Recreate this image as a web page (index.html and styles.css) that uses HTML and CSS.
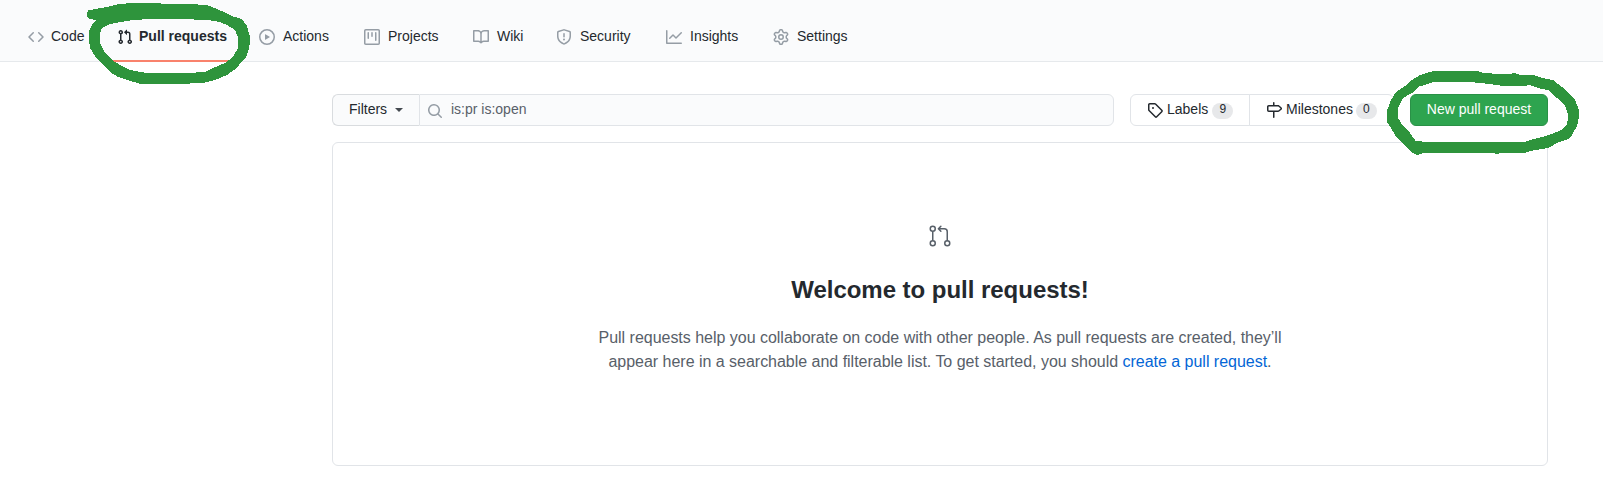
FILE: index.html
```html
<!DOCTYPE html>
<html lang="en">
<head>
<meta charset="utf-8">
<title>Pull requests</title>
<link rel="stylesheet" href="styles.css">
</head>
<body>
<nav class="repo-nav">
  <a class="tab tab-code"><svg class="icon" viewBox="0 0 16 16"><path fill-rule="evenodd" d="M4.72 3.22a.75.75 0 011.06 1.06L2.06 8l3.72 3.72a.75.75 0 11-1.06 1.06L.47 8.53a.75.75 0 010-1.06l4.25-4.25zm6.56 0a.75.75 0 10-1.06 1.06L13.94 8l-3.72 3.72a.75.75 0 101.06 1.06l4.25-4.25a.75.75 0 000-1.06l-4.25-4.25z"/></svg><span>Code</span></a>
  <a class="tab tab-pulls selected"><svg class="icon" viewBox="0 0 16 16"><path fill-rule="evenodd" d="M7.177 3.073L9.573.677A.25.25 0 0110 .854v4.792a.25.25 0 01-.427.177L7.177 3.427a.25.25 0 010-.354zM3.75 2.5a.75.75 0 100 1.5.75.75 0 000-1.5zm-2.25.75a2.25 2.25 0 113 2.122v5.256a2.251 2.251 0 11-1.5 0V5.372A2.25 2.25 0 011.5 3.25zM11 2.5h-1V4h1a1 1 0 011 1v5.628a2.251 2.251 0 101.5 0V5A2.5 2.5 0 0011 2.5zm1 10.25a.75.75 0 111.5 0 .75.75 0 01-1.5 0zM3.75 12a.75.75 0 100 1.5.75.75 0 000-1.5z"/></svg><span>Pull requests</span></a>
  <a class="tab tab-actions"><svg class="icon" viewBox="0 0 16 16"><path fill-rule="evenodd" d="M1.5 8a6.5 6.5 0 1113 0 6.5 6.5 0 01-13 0zM8 0a8 8 0 100 16A8 8 0 008 0zM6.379 5.227A.25.25 0 006 5.442v5.117a.25.25 0 00.379.214l4.264-2.559a.25.25 0 000-.428L6.379 5.227z"/></svg><span>Actions</span></a>
  <a class="tab tab-projects"><svg class="icon" viewBox="0 0 16 16"><path fill-rule="evenodd" d="M1.75 0A1.75 1.75 0 000 1.75v12.5C0 15.216.784 16 1.75 16h12.5A1.75 1.75 0 0016 14.25V1.75A1.75 1.75 0 0014.25 0H1.75zM1.5 1.75a.25.25 0 01.25-.25h12.5a.25.25 0 01.25.25v12.5a.25.25 0 01-.25.25H1.75a.25.25 0 01-.25-.25V1.75zM11.75 3a.75.75 0 00-.75.75v7.5a.75.75 0 001.5 0v-7.5a.75.75 0 00-.75-.75zm-8.25.75a.75.75 0 011.5 0v5.5a.75.75 0 01-1.5 0v-5.5zM8 3a.75.75 0 00-.75.75v3.5a.75.75 0 001.5 0v-3.5A.75.75 0 008 3z"/></svg><span>Projects</span></a>
  <a class="tab tab-wiki"><svg class="icon" viewBox="0 0 16 16"><path fill-rule="evenodd" d="M0 1.75A.75.75 0 01.75 1h4.253c1.227 0 2.317.59 3 1.501A3.744 3.744 0 0111.006 1h4.245a.75.75 0 01.75.75v10.5a.75.75 0 01-.75.75h-4.507a2.25 2.25 0 00-1.591.659l-.622.621a.75.75 0 01-1.06 0l-.622-.621A2.25 2.25 0 005.258 13H.75a.75.75 0 01-.75-.75V1.75zm8.755 3a2.25 2.25 0 012.25-2.25H14.5v9h-3.757c-.71 0-1.4.201-1.992.572l.004-7.322zm-1.504 7.324l.004-5.073-.002-2.253A2.25 2.25 0 005.003 2.5H1.5v9h3.757a3.75 3.75 0 011.994.574z"/></svg><span>Wiki</span></a>
  <a class="tab tab-security"><svg class="icon" viewBox="0 0 16 16"><path fill-rule="evenodd" d="M7.467.133a1.75 1.75 0 011.066 0l5.25 1.68A1.75 1.75 0 0115 3.48V7c0 1.566-.32 3.182-1.303 4.682-.983 1.498-2.585 2.813-5.032 3.855a1.7 1.7 0 01-1.33 0c-2.447-1.042-4.049-2.357-5.032-3.855C1.32 10.182 1 8.566 1 7V3.48a1.75 1.75 0 011.217-1.667l5.25-1.68zm.61 1.429a.25.25 0 00-.153 0l-5.25 1.68a.25.25 0 00-.174.238V7c0 1.358.275 2.666 1.057 3.86.784 1.194 2.121 2.34 4.366 3.297a.2.2 0 00.154 0c2.245-.956 3.582-2.104 4.366-3.298C13.225 9.666 13.5 8.36 13.5 7V3.48a.25.25 0 00-.174-.237l-5.25-1.68zM8.75 4.75a.75.75 0 00-1.5 0v3a.75.75 0 001.5 0v-3zM9 10.5a1 1 0 11-2 0 1 1 0 012 0z"/></svg><span>Security</span></a>
  <a class="tab tab-insights"><svg class="icon" viewBox="0 0 16 16"><path fill-rule="evenodd" d="M1.5 1.75a.75.75 0 00-1.5 0v12.5c0 .414.336.75.75.75h14.5a.75.75 0 000-1.5H1.5V1.75zm14.28 2.53a.75.75 0 00-1.06-1.06L10 7.94 7.53 5.47a.75.75 0 00-1.06 0L3.22 8.72a.75.75 0 001.06 1.06L7 7.06l2.47 2.47a.75.75 0 001.06 0l5.25-5.25z"/></svg><span>Insights</span></a>
  <a class="tab tab-settings"><svg class="icon" viewBox="0 0 16 16"><path fill-rule="evenodd" d="M7.429 1.525a6.593 6.593 0 011.142 0c.036.003.108.036.137.146l.289 1.105c.147.56.55.967.997 1.189.174.086.341.183.501.29.417.278.97.423 1.53.27l1.102-.303c.11-.03.175.016.195.046.219.31.41.641.573.989.014.031.022.11-.059.19l-.815.806c-.411.406-.562.957-.53 1.456a4.588 4.588 0 010 .582c-.032.499.119 1.05.53 1.456l.815.806c.08.08.073.159.059.19a6.494 6.494 0 01-.573.99c-.02.029-.086.074-.195.045l-1.103-.303c-.559-.153-1.112-.008-1.529.27-.16.107-.327.204-.5.29-.449.222-.851.628-.998 1.189l-.289 1.105c-.029.11-.101.143-.137.146a6.613 6.613 0 01-1.142 0c-.036-.003-.108-.037-.137-.146l-.289-1.105c-.147-.56-.55-.967-.997-1.189a4.502 4.502 0 01-.501-.29c-.417-.278-.97-.423-1.53-.27l-1.102.303c-.11.03-.175-.016-.195-.046a6.492 6.492 0 01-.573-.989c-.014-.031-.022-.11.059-.19l.815-.806c.411-.406.562-.957.53-1.456a4.587 4.587 0 010-.582c.032-.499-.119-1.05-.53-1.456l-.815-.806c-.08-.08-.073-.159-.059-.19a6.44 6.44 0 01.573-.99c.02-.029.086-.075.195-.045l1.103.303c.559.153 1.112.008 1.529-.27.16-.107.327-.204.5-.29.449-.222.851-.628.998-1.189l.289-1.105c.029-.11.101-.143.137-.146zM8 0c-.236 0-.47.01-.701.03-.743.065-1.29.615-1.458 1.261l-.29 1.106c-.017.066-.078.158-.211.224a5.994 5.994 0 00-.668.386c-.123.082-.233.09-.3.071L3.27 2.776c-.644-.177-1.392.02-1.82.63a7.977 7.977 0 00-.704 1.217c-.315.675-.111 1.422.363 1.891l.815.806c.05.048.098.147.088.294a6.084 6.084 0 000 .772c.01.147-.038.246-.088.294l-.815.806c-.474.469-.678 1.216-.363 1.891.2.428.436.835.704 1.218.428.609 1.176.806 1.82.63l1.103-.303c.066-.019.176-.011.299.071.213.143.436.272.668.386.133.066.194.158.212.224l.289 1.106c.169.646.715 1.196 1.458 1.26a8.094 8.094 0 001.402 0c.743-.064 1.29-.614 1.458-1.26l.29-1.106c.017-.066.078-.158.211-.224a5.98 5.98 0 00.668-.386c.123-.082.233-.09.3-.071l1.102.302c.644.177 1.392-.02 1.82-.63.268-.382.505-.789.704-1.217.315-.675.111-1.422-.364-1.891l-.814-.806c-.05-.048-.098-.147-.088-.294a6.1 6.1 0 000-.772c-.01-.147.039-.246.088-.294l.814-.806c.475-.469.679-1.216.364-1.891a7.992 7.992 0 00-.704-1.218c-.428-.609-1.176-.806-1.82-.63l-1.103.303c-.066.019-.176.011-.299-.071a5.991 5.991 0 00-.668-.386c-.133-.066-.194-.158-.212-.224L10.16 1.29C9.99.645 9.444.095 8.701.031A8.094 8.094 0 008 0zm1.5 8a1.5 1.5 0 11-3 0 1.5 1.5 0 013 0zM11 8a3 3 0 11-6 0 3 3 0 016 0z"/></svg><span>Settings</span></a>
</nav>
<main class="content">
  <div class="toolbar">
    <div class="search">
      <button class="filters">Filters<i class="caret"></i></button>
      <div class="query"><svg class="icon" viewBox="0 0 16 16"><path fill-rule="evenodd" d="M11.5 7a4.499 4.499 0 11-8.998 0A4.499 4.499 0 0111.5 7zm-.82 4.74a6 6 0 111.06-1.06l3.04 3.04a.75.75 0 11-1.06 1.06l-3.04-3.04z"/></svg><span>is:pr is:open</span></div>
    </div>
    <div class="subnav">
      <a class="subnav-item labels"><svg class="icon" viewBox="0 0 16 16"><path fill-rule="evenodd" d="M2.5 7.775V2.75a.25.25 0 01.25-.25h5.025a.25.25 0 01.177.073l6.25 6.25a.25.25 0 010 .354l-5.025 5.025a.25.25 0 01-.354 0l-6.25-6.25a.25.25 0 01-.073-.177zm-1.5 0V2.75C1 1.784 1.784 1 2.75 1h5.025c.464 0 .91.184 1.238.513l6.25 6.25a1.75 1.75 0 010 2.474l-5.026 5.026a1.75 1.75 0 01-2.474 0l-6.25-6.25A1.75 1.75 0 011 7.775zM6 5a1 1 0 100 2 1 1 0 000-2z"/></svg><span class="name">Labels</span><span class="counter">9</span></a>
      <a class="subnav-item milestones"><svg class="icon" viewBox="0 0 16 16"><path fill-rule="evenodd" d="M7.75 0a.75.75 0 01.75.75V3h3.634c.414 0 .814.147 1.13.414l2.07 1.75a1.75 1.75 0 010 2.672l-2.07 1.75a1.75 1.75 0 01-1.13.414H8.5v5.25a.75.75 0 11-1.5 0V10H2.75A1.75 1.75 0 011 8.25v-3.5C1 3.784 1.784 3 2.75 3H7V.75A.75.75 0 017.75 0zm0 8.5h4.384a.25.25 0 00.161-.06l2.07-1.75a.25.25 0 000-.38l-2.07-1.75a.25.25 0 00-.161-.06H2.75a.25.25 0 00-.25.25v3.5c0 .138.112.25.25.25h5z"/></svg><span class="name">Milestones</span><span class="counter">0</span></a>
    </div>
    <button class="new-pr">New pull request</button>
  </div>
  <section class="blankslate">
    <svg class="hero-icon" viewBox="0 0 24 24"><path fill-rule="evenodd" d="M4.75 3a1.75 1.75 0 100 3.5 1.75 1.75 0 000-3.5zM1.5 4.75a3.25 3.25 0 116.5 0 3.25 3.25 0 01-6.5 0zM4.75 17.5a1.75 1.75 0 100 3.5 1.75 1.75 0 000-3.5zM1.5 19.25a3.25 3.25 0 116.5 0 3.25 3.25 0 01-6.5 0zm17.75-1.75a1.75 1.75 0 100 3.5 1.75 1.75 0 000-3.5zM16 19.25a3.25 3.25 0 116.5 0 3.25 3.25 0 01-6.5 0z"/><path fill-rule="evenodd" d="M4.75 7.25A.75.75 0 015.5 8v8A.75.75 0 014 16V8a.75.75 0 01.75-.75zm8.655-5.53a.75.75 0 010 1.06L12.185 4h4.065A3.75 3.75 0 0120 7.75v8.75a.75.75 0 01-1.5 0V7.75a2.25 2.25 0 00-2.25-2.25h-4.064l1.22 1.22a.75.75 0 01-1.061 1.06l-2.5-2.5a.75.75 0 010-1.06l2.5-2.5a.75.75 0 011.06 0z"/></svg>
    <h3>Welcome to pull requests!</h3>
    <p>Pull requests help you collaborate on code with other people. As pull requests are created, they’ll<br>appear here in a searchable and filterable list. To get started, you should <a>create a pull request</a>.</p>
  </section>
</main>
<svg class="marker" viewBox="0 0 1603 480">
  <path d="M87 14L88 10.5L95 9L107 7L117 4.5L128 3.3L152 3.3L195 4.3L207 5L217 9L227 13.5L233 16.5L242 19L247 26L250 37L249.3 48L246 57L239 65L234 70L227 75L215 80L205 82.5L187 83.7L140 83.7L130 81L118 77L110 72L102 64L95 56L90 48L89 40L89.3 30L93 23L96 20L90 19L87.5 17ZM100 33L102 28L110 24L118 22.5L130 20.5L152 18.7L180 19L208 20L220 22L227 25L235 30L238.3 38L238 48L233 57L225 63L213 68L205 72L187 73L147 73L130 70L122 66L112 60L105 53L100 43Z"/>
  <path d="M1433 71L1477 71L1482 72.500L1497 74L1510 74L1514 73L1519 74.500L1533 75L1542 78L1553 80L1562 87L1568 93L1575 100L1579 110L1579 117L1577 126L1572 135L1568 139L1559 142L1548 148L1530 151L1525 153L1500 153.300L1497 154.500L1494 153.300L1423 153L1417 155L1411 152L1407 148L1402 143L1395 135L1391 128L1387 122L1387.300 110L1391 100L1396 92L1405 86L1412 80L1420 75L1430 72ZM1433 82L1470 82L1490 84L1503 86L1524 86L1530 85L1541 89L1548 90L1557 98L1565 105L1568.300 116L1567 124L1561 130L1552 134L1542 137L1530 140L1524 142L1423 142L1420 141L1416 141.500L1410 133L1403 126L1398 118L1398 108L1403 98L1412 93L1420 86L1425 85Z"/>
</svg>
</body>
</html>
```
FILE: styles.css
```css
* { box-sizing: border-box; }
body {
  margin: 0;
  position: relative;
  width: 1603px;
  height: 480px;
  overflow: hidden;
  background: #fff;
  color: #24292e;
  font: 14px/20px "Liberation Sans", Arial, sans-serif;
}
.icon { width: 16px; height: 16px; flex: none; fill: currentColor; }
.repo-nav {
  display: flex;
  height: 62px;
  padding: 14px 0 0 12px;
  background: #fafbfc;
  border-bottom: 1px solid #e6e9ec;
}
.tab {
  display: flex;
  align-items: center;
  gap: 8px;
  height: 48px;
  padding: 0 0 0 16px;
  white-space: nowrap;
  border-bottom: 2px solid transparent;
}
.tab span { margin-bottom: 2px; }
.tab .icon { color: #959da5; }
.tab-code { width: 73px; margin-right: 16px; gap: 7px; }
.tab-pulls { gap: 6px; }
.tab-actions { width: 105px; }
.tab-projects { width: 109px; }
.tab-wiki { width: 83px; }
.tab-security { width: 110px; }
.tab-insights { width: 107px; }
.tab.selected { width: 134px; margin-right: 8px; font-weight: 700; border-bottom-color: #f9826c; }
.tab.selected .icon { color: #24292e; }
.content { width: 1216px; margin: 32px 0 0 332px; }
.toolbar { display: flex; gap: 16px; height: 32px; margin-bottom: 16px; }
.search { display: flex; width: 782px; }
button { font: inherit; color: inherit; }
.filters {
  display: flex;
  align-items: center;
  gap: 8px;
  width: 87px;
  padding: 0 0 2px 16px;
  background: #fafbfc;
  border: 1px solid #d9dcdf;
  border-right: 0;
  border-radius: 6px 0 0 6px;
}
.caret { border: 4px solid transparent; border-top-color: #444a50; border-bottom: 0; margin-top: 2px; }
.query {
  display: flex;
  align-items: center;
  gap: 8px;
  flex: 1;
  padding: 0 0 2px 7px;
  color: #586069;
  background: #fafbfc;
  border: 1px solid #e1e4e8;
  border-radius: 0 6px 6px 0;
}
.query .icon { color: #959da5; margin-top: 3px; }
.subnav { display: flex; width: 264px; }
.subnav-item { display: flex; align-items: center; padding: 0 0 2px 16px; border: 1px solid #e1e4e8; }
.subnav-item .icon { margin-top: 2px; }
.labels { width: 120px; border-radius: 6px 0 0 6px; }
.milestones { flex: 1; margin-left: -1px; border-radius: 0 6px 6px 0; }
.name { margin: 0 4px; }
.milestones .name { margin-right: 3px; }
.counter {
  min-width: 21px;
  height: 16px;
  margin-top: 4px;
  border-radius: 10px;
  background: #e7e8ea;
  font-size: 12px;
  line-height: 13px;
  text-align: center;
}
.new-pr {
  width: 138px;
  padding: 0 0 2px;
  color: #fff;
  background: #2ea44f;
  border: 1px solid #2a9147;
  border-radius: 6px;
}
.blankslate {
  height: 324px;
  padding-top: 81px;
  text-align: center;
  border: 1px solid #e1e4e8;
  border-radius: 6px;
}
.hero-icon { display: block; width: 24px; height: 24px; margin: 0 auto 24px; fill: #586069; }
h3 { margin: 0 0 18px; font-size: 24px; line-height: 36px; letter-spacing: -0.03px; }
p { margin: 0; color: #586069; font-size: 16px; line-height: 24px; letter-spacing: -0.02px; white-space: nowrap; }
p a { color: #0366d6; }
.marker { position: absolute; inset: 0; width: 1603px; height: 480px; fill: #2e943c; fill-rule: evenodd; pointer-events: none; shape-rendering: crispEdges; }
```
